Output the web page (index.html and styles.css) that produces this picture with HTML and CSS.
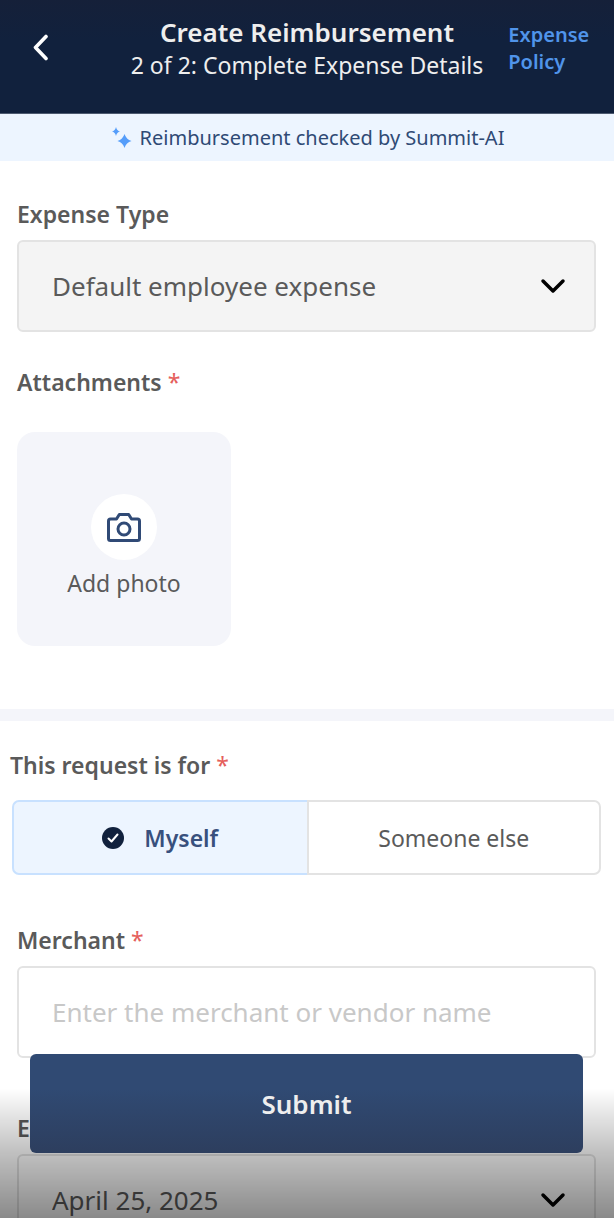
FILE: index.html
```html
<!DOCTYPE html>
<html lang="en">
	<head>
		<meta charset="UTF-8">
		<meta name="viewport" content="width=device-width, initial-scale=1.0">
		<title>Create Reimbursement</title>
		<link rel="stylesheet" href="styles.css">
	</head>

	<body>
		<header class="top-bar">
			<button class="back" type="button" aria-label="Back">
				<svg width="18" height="28" viewBox="0 0 18 28">
					<path stroke-width="3.600" d="M14 3.500L3.500 14.500L14 25.500" />
				</svg>
			</button>
			<div class="heading">
				<h1>Create Reimbursement</h1>
				<p>2 of 2: Complete Expense Details</p>
			</div>
			<a class="policy" href="#policy">Expense Policy</a>
		</header>

		<div class="ai-banner">
			<svg width="20" height="22" viewBox="0 0 20 22">
				<path d="M4 0Q4.900 3.600 8 4.500Q4.900 5.400 4 9Q3.100 5.400 0 4.500Q3.100 3.600 4 0Z" />
				<path d="M12.500 7Q14.200 12.300 19.500 14Q14.200 15.700 12.500 21Q10.800 15.700 5.500 14Q10.800 12.300 12.500 7Z" />
			</svg>
			<span>Reimbursement checked by Summit-AI</span>
		</div>

		<form class="form" id="reimbursement">
			<section class="group">
				<div class="field">
					<label for="expenseType">Expense Type</label>
					<div class="select">
						<select class="control filled" id="expenseType">
							<option>Default employee expense</option>
						</select>
						<svg class="chevron" width="26" height="16" viewBox="0 0 26 16">
							<path stroke-width="3.500" d="M3 3L13 13L23 3" />
						</svg>
					</div>
				</div>
				<div class="field attachments">
					<label for="addPhoto">Attachments <span class="required">*</span></label>
					<button class="add-photo" id="addPhoto" type="button">
						<span class="circle">
							<svg width="34" height="29" viewBox="0 0 34 29">
								<path d="M3.500 6H9.500L12.300 1.500H21.700L24.500 6H30.500Q32.500 6 32.500 8V25.500Q32.500 27.500 30.500 27.500H3.500Q1.500 27.500 1.500 25.500V8Q1.500 6 3.500 6Z" />
								<circle cx="17" cy="16" r="6" />
							</svg>
						</span>
						Add photo
					</button>
				</div>
			</section>

			<section class="group">
				<fieldset class="request-for">
					<legend>This request is for <span class="required">*</span></legend>
					<div class="toggle">
						<label>
							<input type="radio" name="requestFor" checked>
							<svg class="tick" width="22" height="22" viewBox="0 0 22 22">
								<circle cx="11" cy="11" r="11" />
								<path d="M6.500 11.500L9.500 14.500L15.500 7.500" />
							</svg>
							Myself
						</label>
						<label>
							<input type="radio" name="requestFor">
							Someone else
						</label>
					</div>
				</fieldset>
				<div class="field">
					<label for="merchant">Merchant <span class="required">*</span></label>
					<input class="control" id="merchant" type="text" placeholder="Enter the merchant or vendor name">
				</div>
				<div class="field date">
					<label for="expenseDate">Expense Date</label>
					<div class="select">
						<select class="control" id="expenseDate">
							<option>April 25, 2025</option>
						</select>
						<svg class="chevron" width="26" height="16" viewBox="0 0 26 16">
							<path stroke-width="3.500" d="M3 3L13 13L23 3" />
						</svg>
					</div>
				</div>
			</section>
		</form>

		<footer class="submit-bar">
			<button class="submit" type="submit" form="reimbursement">Submit</button>
		</footer>
	</body>

</html>
```
FILE: styles.css
```css
* {
	box-sizing: border-box;
	padding: 0;
	margin: 0;
}

body {
	display: flex;
	flex-direction: column;
	height: 100vh;
	overflow: hidden;
	background: #fff;
	color: #5a5a5a;
	font-family: "Noto Sans", sans-serif;
	font-size: 23px;
	line-height: 32px;
}

button,
input,
select {
	border: 0;
	font: inherit;
	color: inherit;
}

svg {
	flex: none;
	fill: none;
	stroke-linecap: round;
	stroke-linejoin: round;
}

/* header */
.top-bar {
	display: grid;
	grid-template-columns: 1fr auto 1fr;
	column-gap: 25px;
	flex: none;
	height: 114px;
	padding: 16px 17px 0;
	background: linear-gradient(#152039, #11213d 40px);
	border-bottom: 1px solid #4d5a70;
	color: #eee;
}

.back {
	align-self: start;
	justify-self: start;
	display: flex;
	padding: 17px 15px;
	background: none;
}

.back svg {
	stroke: #fff;
}

.heading {
	text-align: center;
	line-height: 33px;
}

.heading h1 {
	font-size: 26px;
	font-weight: 600;
}

.policy {
	padding-top: 5px;
	color: #5094ea;
	font-size: 20px;
	font-weight: 600;
	line-height: 27px;
	text-decoration: none;
}

.ai-banner {
	display: flex;
	flex: none;
	align-items: center;
	justify-content: center;
	gap: 8px;
	height: 47px;
	padding-left: 2px;
	background: #edf5ff;
	color: #2f4a75;
	font-size: 20px;
}

.ai-banner svg {
	fill: #559dfa;
}

/* form */
.form {
	flex: 1;
	min-height: 0;
	overflow-y: auto;
	scrollbar-width: none;
}

.group {
	padding: 37px 18px 63px 17px;
}

.group + .group {
	padding-top: 28px;
	border-top: 12px solid #f4f5fa;
}

.field {
	display: flex;
	flex-direction: column;
	gap: 10px;
}

.field > label,
legend {
	font-weight: 600;
}

.required {
	color: #e5605c;
	font-weight: 400;
}

.control {
	width: 100%;
	height: 92px;
	padding: 0 33px;
	background: #fff;
	border: 2px solid #e3e3e3;
	border-radius: 6px;
	font-size: 26px;
	line-height: 40px;
	appearance: none;
}

.filled {
	background: #f4f4f4;
}

.control::placeholder {
	color: #c8c8c8;
}

.select {
	display: grid;
	align-items: center;
}

.select > * {
	grid-area: 1 / 1;
}

.chevron {
	justify-self: end;
	margin-right: 30px;
	stroke: #000;
	pointer-events: none;
}

.attachments {
	gap: 34px;
	margin-top: 34px;
}

.add-photo {
	display: flex;
	flex-direction: column;
	align-items: center;
	justify-content: center;
	gap: 7px;
	width: 214px;
	height: 214px;
	padding-top: 15px;
	background: #f4f5fa;
	border-radius: 18px;
}

.circle {
	display: flex;
	align-items: center;
	justify-content: center;
	width: 66px;
	height: 66px;
	background: #fff;
	border-radius: 50%;
}

.circle svg {
	stroke: #304a76;
	stroke-width: 3;
}

.request-for {
	margin: 0 -5px 49px -7px;
	border: 0;
}

.toggle {
	display: grid;
	grid-template-columns: 1fr 1fr;
	margin: 19px 0 0 2px;
}

.toggle label {
	display: flex;
	align-items: center;
	justify-content: center;
	gap: 20px;
	height: 75px;
	border: 2px solid #e3e3e3;
	border-radius: 0 7px 7px 0;
}

.toggle label:first-child {
	border-right: 0;
	border-radius: 7px 0 0 7px;
}

.toggle input {
	position: absolute;
	appearance: none;
}

.toggle label:has(:checked) {
	background: #edf5ff;
	border-color: #c8e1ff;
	color: #38507d;
	font-weight: 600;
}

.tick {
	stroke: #fff;
	stroke-width: 2;
}

.tick circle {
	fill: #11213d;
	stroke: none;
}

.date {
	margin-top: 54px;
}

/* submit button floats over the form */
.submit-bar {
	position: fixed;
	right: 0;
	bottom: 0;
	left: 0;
	padding: 0 31px 65px 30px;
	background: linear-gradient(transparent 34px, rgba(0, 0, 0, .25) 100px, rgba(0, 0, 0, .46));
}

.submit {
	display: block;
	width: 100%;
	height: 99px;
	background: linear-gradient(#304a73 35%, #2d3e5e);
	border-radius: 6px;
	color: #eee;
	font-size: 26px;
	font-weight: 600;
}
```
